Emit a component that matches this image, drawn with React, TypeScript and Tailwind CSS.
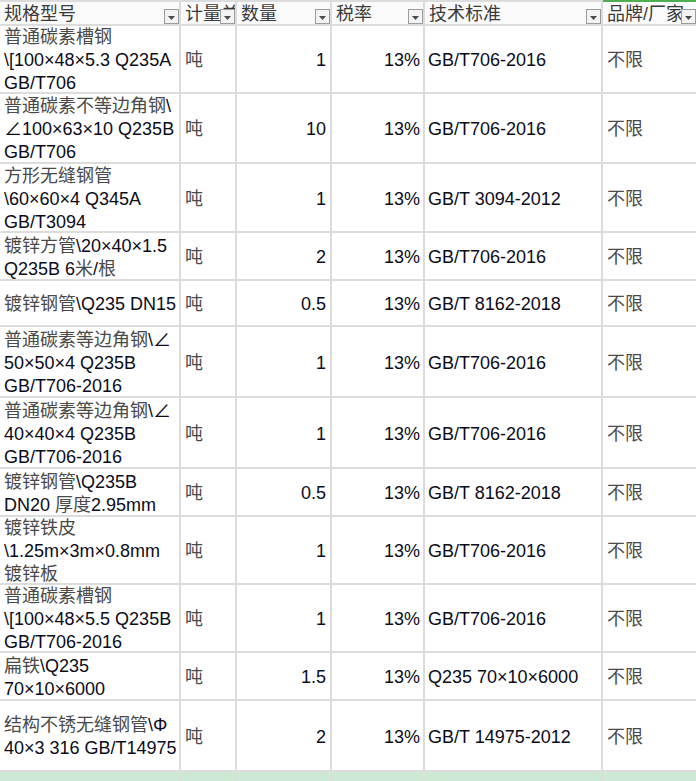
import type { ReactNode } from 'react';

type Row = {
  spec: string[];
  qty: string;
  standard: string;
  h: string;
};

const ROWS: Row[] = [
  { spec: ['普通碳素槽钢', '\\[100×48×5.3 Q235A', 'GB/T706'], qty: '1', standard: 'GB/T706-2016', h: 'h-[66px]' },
  { spec: ['普通碳素不等边角钢\\', '∠100×63×10 Q235B', 'GB/T706'], qty: '10', standard: 'GB/T706-2016', h: 'h-[68px]' },
  { spec: ['方形无缝钢管', '\\60×60×4 Q345A', 'GB/T3094'], qty: '1', standard: 'GB/T 3094-2012', h: 'h-[67px]' },
  { spec: ['镀锌方管\\20×40×1.5', 'Q235B 6米/根'], qty: '2', standard: 'GB/T706-2016', h: 'h-[46px]' },
  { spec: ['镀锌钢管\\Q235 DN15'], qty: '0.5', standard: 'GB/T 8162-2018', h: 'h-[44px]' },
  { spec: ['普通碳素等边角钢\\∠', '50×50×4 Q235B', 'GB/T706-2016'], qty: '1', standard: 'GB/T706-2016', h: 'h-[69px]' },
  { spec: ['普通碳素等边角钢\\∠', '40×40×4 Q235B', 'GB/T706-2016'], qty: '1', standard: 'GB/T706-2016', h: 'h-[69px]' },
  { spec: ['镀锌钢管\\Q235B', 'DN20 厚度2.95mm'], qty: '0.5', standard: 'GB/T 8162-2018', h: 'h-[46px]' },
  { spec: ['镀锌铁皮', '\\1.25m×3m×0.8mm', '镀锌板'], qty: '1', standard: 'GB/T706-2016', h: 'h-[66px]' },
  { spec: ['普通碳素槽钢', '\\[100×48×5.5 Q235B', 'GB/T706-2016'], qty: '1', standard: 'GB/T706-2016', h: 'h-[66px]' },
  { spec: ['扁铁\\Q235', '70×10×6000'], qty: '1.5', standard: 'Q235 70×10×6000', h: 'h-[46px]' },
  { spec: ['结构不锈无缝钢管\\Φ', '40×3 316 GB/T14975'], qty: '2', standard: 'GB/T 14975-2012', h: 'h-[69px]' },
];

// Chinese glyphs render thin and greyish in the sheet, latin text is near black
function Mixed({ text }: { text: string }) {
  const parts = text.split(/([\u4e00-\u9fff]+)/);
  return (
    <>
      {parts.map((p, i) =>
        /[\u4e00-\u9fff]/.test(p) ? (
          <span key={i} className="text-[#4a4a4a]">{p}</span>
        ) : (
          <span key={i}>{p}</span>
        ),
      )}
    </>
  );
}

function FilterButton() {
  return (
    <span className="absolute bottom-0 right-0 flex h-[15px] w-[15px] items-center justify-center border border-[#9c9c9c] bg-[#f3f3f3]">
      <svg width="7" height="4" viewBox="0 0 7 4" className="mt-[2px]">
        <path d="M0 0h7L3.5 4z" fill="#4a4a4a" />
      </svg>
    </span>
  );
}

function HeaderCell({ label, last }: { label: string; last?: boolean }) {
  return (
    <div
      className={`relative h-[22px] overflow-hidden bg-[#fafafa] pl-[4px] pt-[1px] text-[18px] leading-[22px] whitespace-nowrap text-[#3a3a3a] ${
        last ? 'mt-[-2px] h-[24px] border-t-2 border-[#4caf50]' : ''
      }`}
    >
      {label}
      <FilterButton />
    </div>
  );
}

function Cell({ children, className = '' }: { children: ReactNode; className?: string }) {
  return <div className={`flex items-center bg-white pt-[3px] ${className}`}>{children}</div>;
}

export default function App() {
  const font = "font-['Liberation_Sans','Noto_Sans_CJK_SC',sans-serif]";
  return (
    <div className={`h-[781px] w-[696px] overflow-hidden bg-[#dcdcdc] pt-[2px] text-[#0b0b1a] ${font}`}>
      <div className="grid grid-cols-[179px_54px_93px_91px_176px_93px] gap-[2px]">
        <HeaderCell label="规格型号" />
        <HeaderCell label="计量单位" />
        <HeaderCell label="数量" />
        <HeaderCell label="税率" />
        <HeaderCell label="技术标准" />
        <HeaderCell label="品牌/厂家" last />

        {ROWS.map((r, i) => (
          <div key={i} className="contents text-[18px] leading-[23px]">
            <Cell className={`${r.h} pl-[4px]`}>
              <div className="whitespace-nowrap">
                {r.spec.map((line, j) => (
                  <div key={j}>
                    <Mixed text={line} />
                  </div>
                ))}
              </div>
            </Cell>
            <Cell className={`${r.h} pl-[4px]`}>
              <span className="text-[#4a4a4a]">吨</span>
            </Cell>
            <Cell className={`${r.h} justify-end pr-[4px]`}>{r.qty}</Cell>
            <Cell className={`${r.h} justify-end pr-[3px]`}>13%</Cell>
            <Cell className={`${r.h} pl-[3px] whitespace-nowrap`}>{r.standard}</Cell>
            <Cell className={`${r.h} pl-[4px]`}>
              <span className="text-[#4a4a4a]">不限</span>
            </Cell>
          </div>
        ))}

        {Array.from({ length: 6 }).map((_, i) => (
          <div key={`g${i}`} className="h-[20px] bg-[#cde8d3]" />
        ))}
      </div>
    </div>
  );
}
